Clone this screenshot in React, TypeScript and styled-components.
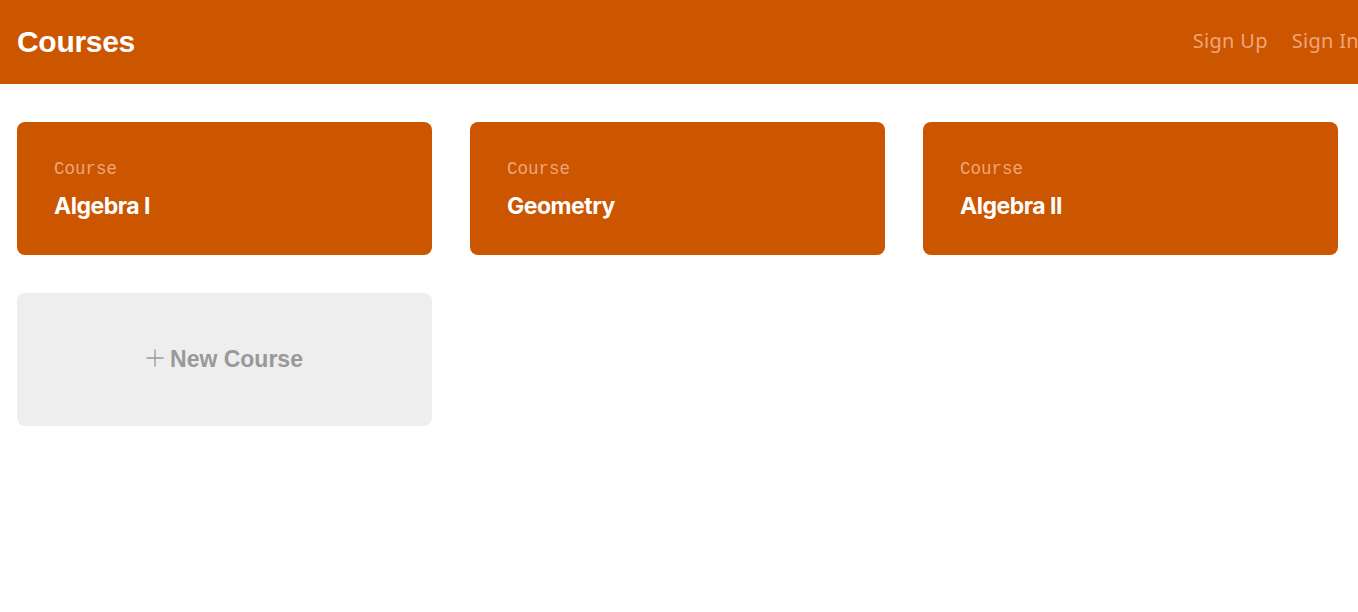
import React from "react";
import styled, { createGlobalStyle } from "styled-components";

const Global = createGlobalStyle`
  html, body { margin: 0; padding: 0; background: #ffffff; }
  body { font-family: "Liberation Sans", Arial, sans-serif; overflow: hidden; }
  * { box-sizing: border-box; }
`;

const Header = styled.header`
  height: 84px;
  background: #cc5500;
  display: flex;
  align-items: center;
  justify-content: space-between;
  padding-left: 17px;
  overflow: hidden;
`;

const Brand = styled.h1`
  margin: 0;
  color: #ffffff;
  font-family: "Liberation Sans", Arial, sans-serif;
  font-weight: 700;
  font-size: 30px;
  letter-spacing: -0.3px;
`;

const Nav = styled.nav`
  display: flex;
  gap: 24px;
  margin-right: -1px;
  padding-bottom: 4px;
`;

const NavLink = styled.a`
  color: #eea679;
  font-family: "Noto Sans", sans-serif;
  font-size: 20px;
  letter-spacing: 0.3px;
  text-decoration: none;
  white-space: nowrap;
`;

const Grid = styled.main`
  display: grid;
  grid-template-columns: repeat(3, 415px);
  column-gap: 38px;
  row-gap: 38px;
  padding: 38px 17px;
`;

const Card = styled.div<{ $muted?: boolean }>`
  height: 133px;
  border-radius: 8px;
  background: ${(p) => (p.$muted ? "#eeeeee" : "#cc5500")};
  padding: 37px 37px;
  display: flex;
  flex-direction: column;
  ${(p) => (p.$muted ? "align-items: center; justify-content: center; padding: 0;" : "")}
`;

const Label = styled.div`
  font-family: "Liberation Mono", monospace;
  font-size: 17.5px;
  line-height: 20px;
  color: #eea679;
`;

const Title = styled.div`
  margin-top: 13px;
  font-family: "Inter", sans-serif;
  font-weight: 700;
  font-size: 23px;
  line-height: 28px;
  letter-spacing: -0.5px;
  color: #ffffff;
`;

const NewLabel = styled.div`
  display: flex;
  align-items: center;
  gap: 6px;
  font-family: "Liberation Sans", Arial, sans-serif;
  font-weight: 700;
  font-size: 23px;
  color: #999999;
`;

const Plus = () => (
  <svg width="18" height="18" viewBox="0 0 18 18" style={{ marginTop: -3 }}>
    <path d="M9 0.5V17.5M0.5 9H17.5" stroke="#999999" strokeWidth="1.3" fill="none" />
  </svg>
);

const courses = ["Algebra I", "Geometry", "Algebra II"];

export default function App() {
  return (
    <>
      <Global />
      <Header>
        <Brand>Courses</Brand>
        <Nav>
          <NavLink href="#">Sign Up</NavLink>
          <NavLink href="#">Sign In</NavLink>
        </Nav>
      </Header>
      <Grid>
        {courses.map((c) => (
          <Card key={c}>
            <Label>Course</Label>
            <Title>{c}</Title>
          </Card>
        ))}
        <Card $muted>
          <NewLabel>
            <Plus />
            New Course
          </NewLabel>
        </Card>
      </Grid>
    </>
  );
}
